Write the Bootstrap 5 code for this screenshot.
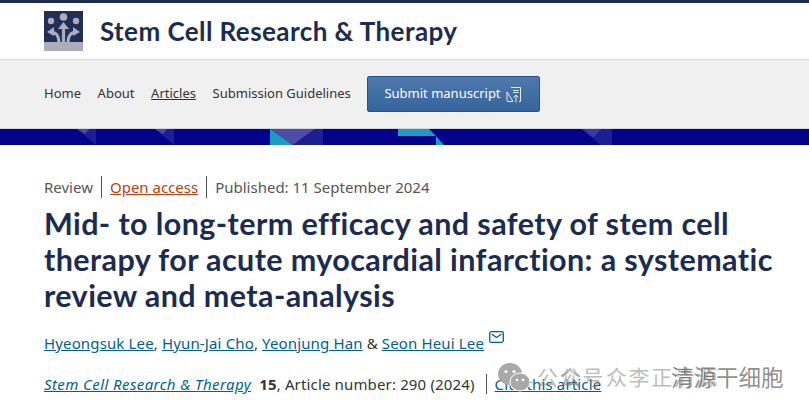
<!DOCTYPE html>
<html lang="en"><head><meta charset="utf-8"><title>Article</title>
<link href="https://cdn.jsdelivr.net/npm/bootstrap@5.3.0/dist/css/bootstrap.min.css" rel="stylesheet">
<style>
html,body{height:409px;overflow:hidden}
body{font-family:"Noto Sans","Open Sans",sans-serif;font-size:15px;color:#333;background:#fff;position:relative}
a{color:#025e8d}
.topline{height:3px;background:#1b2c50}
.brandbar{height:56px;padding:0 0 0 44px;gap:17px;border-bottom:1px solid #d5d5d5;box-sizing:content-box}
.brandname{font-family:Lato,sans-serif;font-weight:700;font-size:26px;color:#1b2c50;letter-spacing:.43px}
.navarea{height:69px;background:#f0f0f0;padding-left:44px;border-bottom:1px solid #d5d5d5}
.navarea a{font-size:13px;color:#333;text-decoration:none;margin-right:16.6px}
.navarea a.curr{text-decoration:underline}
.navarea a.subbtn{background:linear-gradient(#5079ab,#33659c);border:1px solid #1f5590;border-radius:2px;color:#fff;width:173px;height:36px;font-size:13px;padding:0 0 0 16px;margin:0;gap:5px}
.band{height:16px;display:block;width:100%}
.artmain{padding:31px 20px 0 44px}
.metaline{font-size:15px;color:#555;height:22px}
.metaline span{padding-right:8px;margin-right:8px;border-right:1px solid #555;line-height:22px}
.metaline span:last-child{border:0}
.metaline a{color:#c0400f}
.arttitle{font-family:Lato,sans-serif;font-weight:700;font-size:30.5px;line-height:36px;color:#1b2c50;margin:7px 0 0;letter-spacing:.4px}
.authors{margin-top:19px;font-size:15px;line-height:22px;letter-spacing:.14px}
.authors svg{margin:-1px 0 0 1px}
.citeline{margin-top:19px;font-size:15px;line-height:22px;color:#333;letter-spacing:.15px}
.citeline i{letter-spacing:.4px}
.citeline .sep{border-left:1px solid #555;padding-left:8px;margin-left:11px;display:inline-block;line-height:20px}
.wm{position:absolute;left:498px;top:362px;height:30px;width:290px;pointer-events:none;font-family:"Noto Sans CJK SC",sans-serif;white-space:nowrap}
.wmback{position:absolute;top:-1px;line-height:30px;font-size:21px;letter-spacing:1.6px;color:rgba(120,120,120,.5)}
.wmb1{left:39px}
.wmb2{left:62px}
.wmb3{left:108px}
.wmfront{position:absolute;left:173px;top:-1px;line-height:30px;font-size:22.5px;color:rgba(70,70,70,.62)}
</style></head><body>
<div class="topline"></div>
<div class="brandbar d-flex align-items-center">
<svg width="39" height="40" viewBox="0 0 39 40"><rect width="39" height="40" fill="#1f2f56"/><rect y="31" width="39" height="9" fill="#aeabbc"/><g fill="#aeabbc"><circle cx="7" cy="10" r="3.2"/><circle cx="19.500" cy="6" r="3.8"/><circle cx="32" cy="10" r="3.200"/></g><g fill="none" stroke="#aeabbc" stroke-width="3.2"><path d="M19.500 31V15"/><path d="M15 31C15 25 12 21 6 21"/><path d="M24 31C24 25 27 21 33 21"/></g><g fill="#aeabbc"><path d="M19.500 11l5.500 7h-11z"/><path d="M3 21l7-5v9z"/><path d="M36 21l-7-5v9z"/></g></svg>
<div class="brandname">Stem Cell Research &amp; Therapy</div>
</div>
<nav class="navarea d-flex align-items-center">
<a href="#">Home</a><a href="#">About</a><a href="#" class="curr">Articles</a><a href="#">Submission Guidelines</a>
<a href="#" class="btn subbtn d-inline-flex align-items-center">Submit manuscript
<svg width="16" height="17" viewBox="0 0 16 17" fill="none" stroke="#e8eef5" stroke-width="1"><path d="M5 1.500H14.500V15.500H13M7 15.500H2a1 1 0 0 1-1-1V6z"/><path d="M7 4.500H12.500M7 6.500H12.500"/><path d="M10 16.500V9M7.500 11.500L10 9L12.500 11.500"/></svg></a>
</nav>
<svg class="band" viewBox="0 0 809 16" preserveAspectRatio="none"><rect width="809" height="16" fill="#02028b"/>
<path d="M77 0L96 16V0Z" fill="#1d1e96"/><path d="M77 0H89L85 5Z" fill="#4f4ba8"/>
<path d="M155 0L174 16V0Z" fill="#1d1e96"/><path d="M155 0H167L163 5Z" fill="#4f4ba8"/>
<path d="M270 0H315L293 16Z" fill="#4f4ba8"/><path d="M315 0H323V16H293Z" fill="#1d1e96"/><path d="M270 0L293 16H270Z" fill="#1d9bc3"/>
<path d="M398 0H429L436 7H398Z" fill="#1d9bc3"/><path d="M436 7L444 16H436Z" fill="#1d9bc3"/>
<path d="M582 0H602L593 9Z" fill="#3b39a3"/><path d="M602 0H612V16H600L593 9Z" fill="#1d1e96"/>
</svg>
<main class="artmain">
<div class="metaline d-flex align-items-center"><span>Review</span><span><a href="#">Open access</a></span><span>Published: 11 September 2024</span></div>
<h1 class="arttitle">Mid- to long-term efficacy and safety of stem cell therapy for acute myocardial infarction: a systematic review and meta-analysis</h1>
<div class="authors"><a href="#">Hyeongsuk Lee</a>, <a href="#">Hyun-Jai Cho</a>, <a href="#">Yeonjung Han</a> &amp; <a href="#">Seon Heui Lee</a>
<svg class="align-top" width="15" height="12" viewBox="0 0 15 12" fill="none" stroke="#025e8d" stroke-width="1.300"><rect x=".7" y=".7" width="13.600" height="10.600" rx="1.500"/><path d="M2.500 3L7.500 6.500L12.500 3"/></svg></div>
<div class="citeline"><a href="#"><i>Stem Cell Research &amp; Therapy</i></a>&nbsp; <b>15</b>, Article number: 290 (2024)<span class="sep"><a href="#">Cite this article</a></span></div>
</main>
<div class="wm">
<svg width="34" height="30" viewBox="0 0 34 30"><ellipse cx="12" cy="12" rx="12" ry="11" fill="#a9a9a9"/><circle cx="8" cy="9.500" r="1.600" fill="#fff"/><circle cx="16" cy="9.500" r="1.600" fill="#fff"/><ellipse cx="22" cy="20" rx="10" ry="9" fill="#a9a9a9" stroke="#fff"/><circle cx="19" cy="18" r="1.300" fill="#fff"/><circle cx="25" cy="18" r="1.300" fill="#fff"/></svg>
<span class="wmback wmb1">公众号</span>
<span class="wmback wmb2">公</span>
<span class="wmback wmb3">众李正清源</span>
<span class="wmfront">清源干细胞</span>
</div>
</body></html>
